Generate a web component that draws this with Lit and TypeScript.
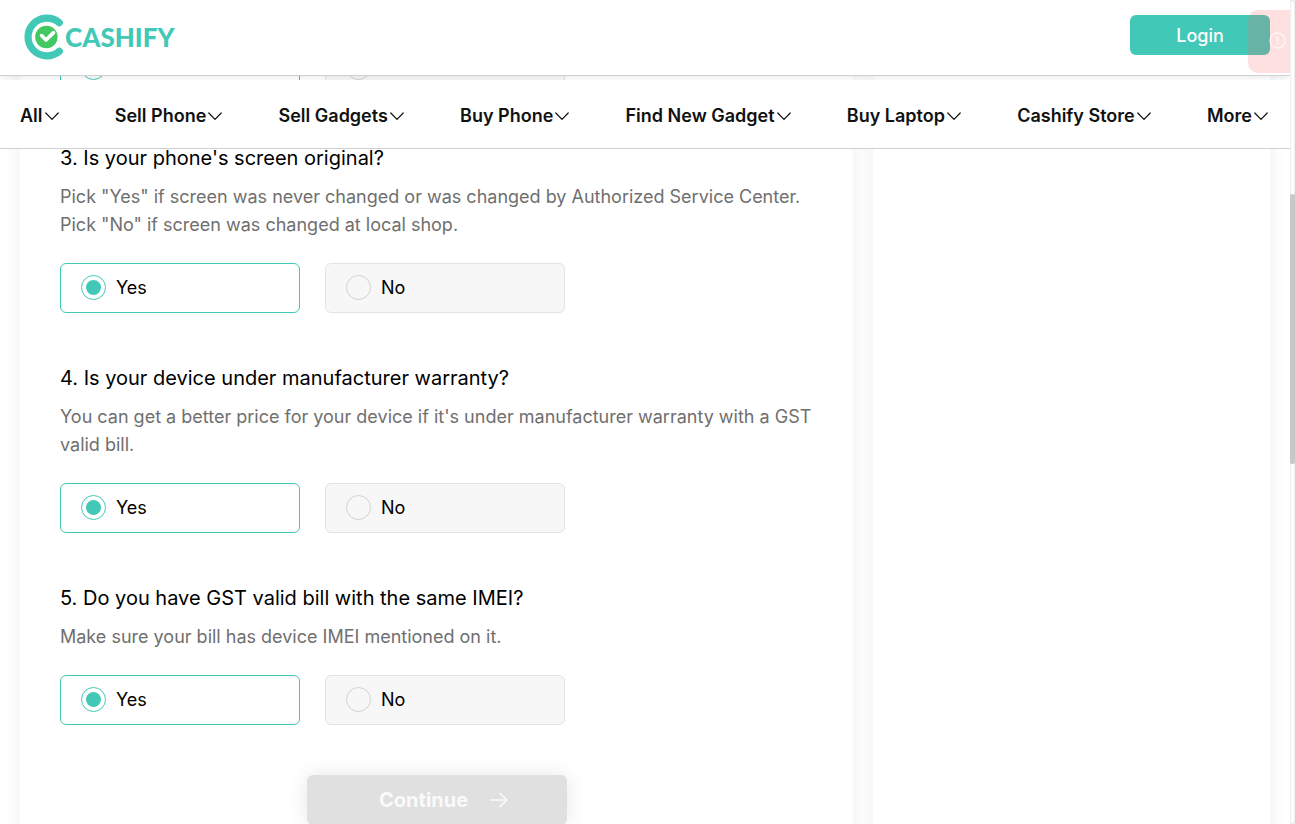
import { LitElement, html, css, svg } from "lit";
import { customElement, property } from "lit/decorators.js";

interface Question {
  id: string;
  title?: string;
  hint?: string;
}

const MENU = [
  "All",
  "Sell Phone",
  "Sell Gadgets",
  "Buy Phone",
  "Find New Gadget",
  "Buy Laptop",
  "Cashify Store",
  "More",
];

const QUESTIONS: Question[] = [
  { id: "q2" },
  {
    id: "q3",
    title: "3. Is your phone's screen original?",
    hint: 'Pick "Yes" if screen was never changed or was changed by Authorized Service Center. Pick "No" if screen was changed at local shop.',
  },
  {
    id: "q4",
    title: "4. Is your device under manufacturer warranty?",
    hint: "You can get a better price for your device if it's under manufacturer warranty with a GST valid bill.",
  },
  {
    id: "q5",
    title: "5. Do you have GST valid bill with the same IMEI?",
    hint: "Make sure your bill has device IMEI mentioned on it.",
  },
];

const chevron = svg`<path d="M0.8 1 L7 7.4 L13.2 1" fill="none" stroke="currentColor" stroke-width="1.2" stroke-linecap="round" stroke-linejoin="round"/>`;

@customElement("device-question")
export class DeviceQuestion extends LitElement {
  @property({ attribute: false }) question!: Question;

  static styles = css`
    :host {
      display: block;
    }
    .question {
      border: 0;
      margin: 0;
      padding: 0;
      min-width: 0;
    }
    .title {
      margin: 0;
      font-size: 20px;
      font-weight: 400;
      line-height: 30px;
      color: #000;
    }
    .hint {
      margin: 10px 0 24px;
      font-size: 18px;
      font-weight: 400;
      line-height: 28px;
      color: #6f6f6f;
    }
    .options {
      display: flex;
      gap: 25px;
    }
    .option {
      box-sizing: border-box;
      display: flex;
      align-items: center;
      gap: 10px;
      width: 240px;
      height: 50px;
      padding: 0 20px 2px;
      border: 1px solid #e2e2e2;
      border-radius: 6px;
      background: #f7f7f7;
      font-size: 18px;
      line-height: 28px;
      color: #000;
      cursor: pointer;
    }
    .option:has(.radio:checked) {
      border-color: #42c8b7;
      background: #fff;
    }
    .radio {
      appearance: none;
      box-sizing: border-box;
      flex: none;
      width: 25px;
      height: 25px;
      margin: 0;
      border: 1px solid #d2d2d2;
      border-radius: 50%;
    }
    .radio:checked {
      border-color: #42c8b7;
      background: #42c8b7;
      background-clip: content-box;
      padding: 4px;
    }
    .caption {
      padding-top: 2px;
    }
  `;

  private option(label: string, checked: boolean) {
    const { id, title } = this.question;
    return html`<label class="option">
      <input class="radio" type="radio" name=${id} aria-label=${label} ?checked=${checked} />
      ${title ? html`<span class="caption">${label}</span>` : null}
    </label>`;
  }

  render() {
    const { title, hint } = this.question;
    return html`<fieldset class="question">
      ${title ? html`<h3 class="title">${title}</h3>` : null}
      ${hint ? html`<p class="hint">${hint}</p>` : null}
      <div class="options">${this.option("Yes", true)}${this.option("No", false)}</div>
    </fieldset>`;
  }
}

@customElement("app-root")
export class AppRoot extends LitElement {
  static styles = css`
    :host {
      display: flex;
      height: 100vh;
      overflow: hidden;
      background: #fff;
      font-family: Inter, "Liberation Sans", sans-serif;
    }
    .page {
      position: relative;
      flex: 1;
      min-width: 0;
      overflow: hidden;
    }
    .header {
      position: absolute;
      inset: 0 0 auto;
      z-index: 2;
      box-sizing: border-box;
      display: flex;
      align-items: center;
      justify-content: space-between;
      height: 76px;
      padding: 0 20px 5px 24px;
      border-bottom: 1px solid #d0d0d0;
      background: #fff;
      box-shadow: 0 2px 6px rgba(0, 0, 0, 0.08);
    }
    .logo {
      display: flex;
      align-items: center;
      padding-top: 4px;
      color: #42c8b7;
      font-family: Lato, Inter, sans-serif;
      font-size: 26px;
      font-weight: 900;
      line-height: 30px;
      text-decoration: none;
    }
    .mark {
      display: block;
    }
    .login {
      width: 140px;
      height: 40px;
      padding: 2px 0 0;
      border: 0;
      border-radius: 6px;
      background: #42c8b7;
      color: #fff;
      font: 500 18px/28px Inter, "Liberation Sans", sans-serif;
    }
    .nav {
      position: absolute;
      inset: 80px 0 auto;
      z-index: 3;
      box-sizing: border-box;
      display: flex;
      align-items: center;
      justify-content: space-between;
      height: 69px;
      padding: 4px 22px 0 20px;
      border-bottom: 1px solid #d0d0d0;
      background: #fff;
    }
    .item {
      display: flex;
      align-items: center;
      gap: 2px;
      padding: 0;
      border: 0;
      background: none;
      color: #111;
      font: 600 18px/28px Inter, "Liberation Sans", sans-serif;
      white-space: nowrap;
    }
    .toast {
      position: absolute;
      top: 10px;
      right: 0;
      z-index: 4;
      box-sizing: border-box;
      display: flex;
      align-items: center;
      justify-content: flex-end;
      width: 42px;
      height: 63px;
      padding: 0 4px 3px 0;
      border-radius: 10px 0 0 10px;
      background: rgba(255, 100, 100, 0.2);
    }
    .columns {
      display: grid;
      grid-template-columns: minmax(0, 21fr) minmax(0, 10fr);
      gap: 20px;
      padding: 0 20px;
      min-height: 100%;
    }
    .card {
      box-sizing: border-box;
      background: #fff;
      box-shadow: 0 0 18px rgba(0, 0, 0, 0.07);
    }
    .quiz {
      display: flex;
      flex-direction: column;
      gap: 50px;
      padding: 43px 40px 50px;
    }
    .continue {
      display: flex;
      align-items: center;
      justify-content: center;
      align-self: center;
      gap: 22px;
      width: 260px;
      height: 50px;
      padding: 0 0 0 14px;
      border: 0;
      border-radius: 6px;
      background: #e0e0e0;
      box-shadow: 0 0 20px rgba(0, 0, 0, 0.1);
      color: #fafafa;
      font: 700 20px/28px Inter, "Liberation Sans", sans-serif;
    }
    .track {
      box-sizing: border-box;
      width: 5px;
      padding-top: 194px;
      border-radius: 5px;
      background: #fff;
      box-shadow: inset 0 0 2px rgba(0, 0, 0, 0.25);
    }
    .thumb {
      height: 270px;
      border-radius: 2px;
      background: #c8c8c8;
    }
  `;

  render() {
    return html`
      <div class="page">
        <header class="header">
          <a class="logo" href="#">
            <svg class="mark" width="41" height="46" viewBox="0 0 41 46" aria-hidden="true">
              <path d="M36.3 8.7 A18.9 18.9 0 1 0 36.3 37.3" fill="none" stroke="#42c8b7" stroke-width="7.2" stroke-linecap="round" transform="translate(-1 0)" />
              <circle cx="22.4" cy="23" r="11.2" fill="#43c862" />
              <path d="M17.6 21.6 L22 26 L29.5 18.6" fill="none" stroke="#fff" stroke-width="3.6" stroke-linecap="round" stroke-linejoin="round" />
            </svg>
            <span>CASHIFY</span>
          </a>
          <button class="login" type="button">Login</button>
        </header>
        <nav class="nav">
          ${MENU.map(
            (name) => html`<button class="item" type="button">
              ${name}<svg width="14" height="9" viewBox="0 0 14 9" aria-hidden="true">${chevron}</svg>
            </button>`
          )}
        </nav>
        <div class="toast" role="alert">
          <svg width="17" height="17" viewBox="0 0 17 17" aria-hidden="true" fill="none" stroke="#fff" stroke-opacity="0.75">
            <circle cx="8.5" cy="8.5" r="7.5" stroke-width="1.3" />
            <path d="M8.5 4.8 V9.4 M8.5 11 V12.6" stroke-width="1.8" />
          </svg>
        </div>
        <main class="columns">
          <section class="card quiz">
            ${QUESTIONS.map((q) => html`<device-question .question=${q}></device-question>`)}
            <button class="continue" type="button">
              Continue
              <svg width="18" height="16" viewBox="0 0 18 16" aria-hidden="true" fill="none" stroke="currentColor" stroke-width="1.6" stroke-linecap="round" stroke-linejoin="round">
                <path d="M1 8 H17 M10 1.3 L17 8 L10 14.7" />
              </svg>
            </button>
          </section>
          <aside class="card summary"></aside>
        </main>
      </div>
      <div class="track" aria-hidden="true"><div class="thumb"></div></div>
    `;
  }
}
